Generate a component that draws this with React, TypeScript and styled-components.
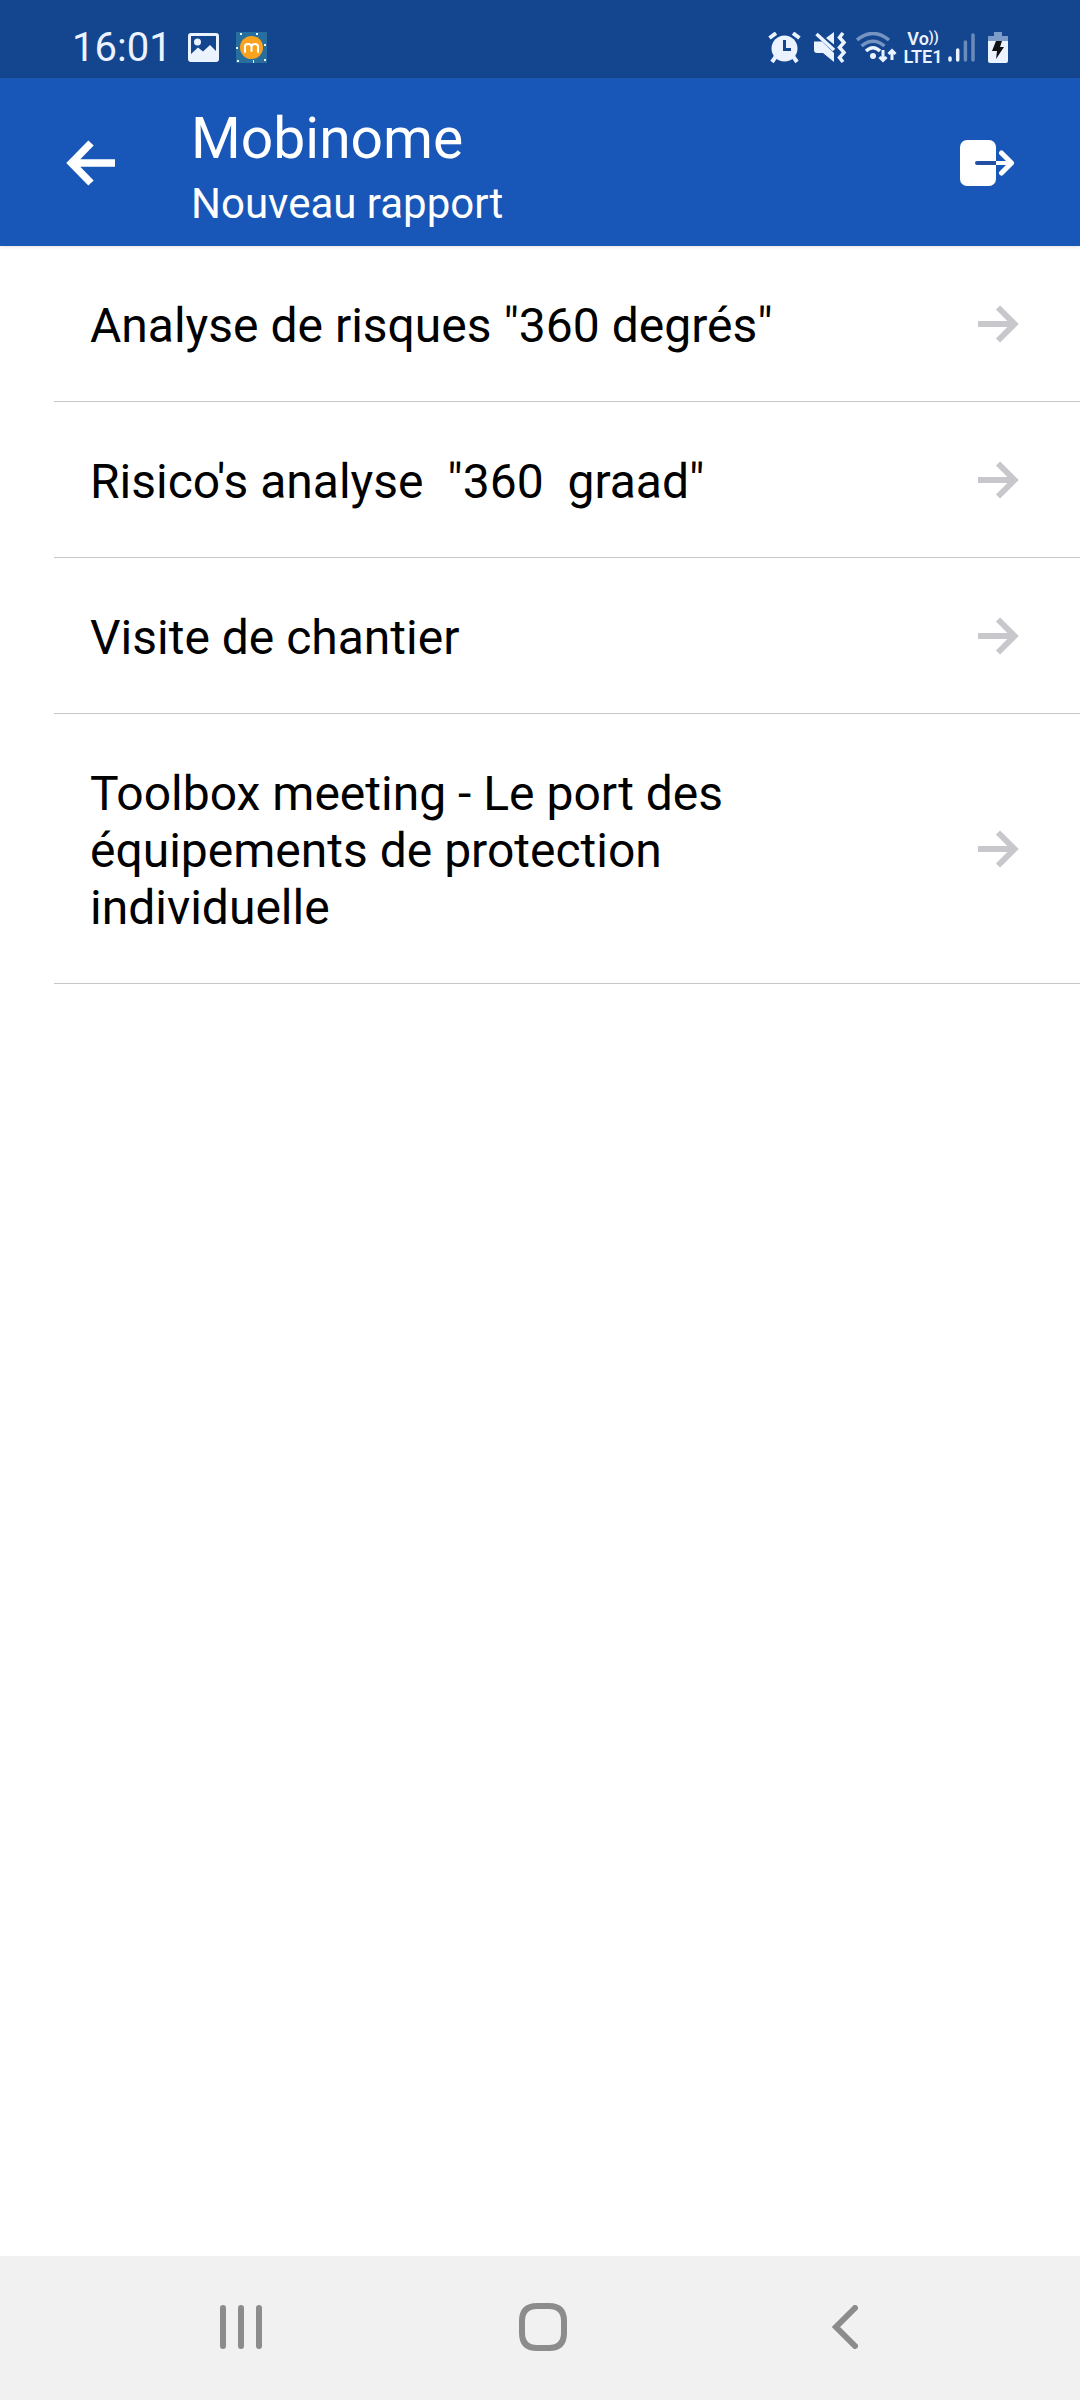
import React from 'react';
import styled, { createGlobalStyle } from 'styled-components';

const GlobalStyle = createGlobalStyle`
  *, *::before, *::after { box-sizing: border-box; }
  body { margin: 0; background: #fff; font-family: Roboto, "Noto Sans", sans-serif; color: #000; }
  button { font: inherit; color: inherit; border: 0; background: none; padding: 0; cursor: pointer; }
  svg { display: block; flex: none; }
`;

const Screen = styled.div`
  display: flex;
  flex-direction: column;
  min-height: 100vh;
`;

const StatusBar = styled.div`
  display: flex;
  align-items: center;
  justify-content: space-between;
  height: 78px;
  padding: 18px 72px 0 72px;
  background: #14458f;
  color: #eaf3ff;
`;

const StatusGroup = styled.div<{ $gap: number }>`
  display: flex;
  align-items: center;
  gap: ${(p) => p.$gap}px;
`;

const Clock = styled.time`
  font-size: 40px;
  line-height: 48px;
`;

const Network = styled.div`
  display: flex;
  flex-direction: column;
  width: 42px;
  font-size: 18px;
  font-weight: 600;
  line-height: 18px;
  text-align: center;
`;

const Waves = styled.span`
  font-size: 14px;
  line-height: 14px;
  vertical-align: top;
`;

const AppBar = styled.header`
  display: flex;
  align-items: center;
  padding: 2px 57px 0 55px;
  background: #1857b8;
  color: #fff;
  box-shadow: 0 1px 4px rgba(0, 0, 0, 0.12);
`;

const BarButton = styled.button`
  display: flex;
  align-items: center;
  justify-content: center;
  width: 72px;
  height: 72px;
`;

const Titles = styled.div`
  flex: 1;
  padding: 22px 0 14px 64px;
`;

const Title = styled.h1`
  margin: 0;
  font-size: 57px;
  font-weight: 400;
  line-height: 74px;
`;

const Subtitle = styled.p`
  margin: 0;
  font-size: 42px;
  line-height: 56px;
`;

const Reports = styled.ul`
  flex: 1;
  margin: 0;
  padding: 0 0 0 54px;
  list-style: none;
`;

const ReportItem = styled.li`
  border-bottom: 1px solid #c8c7cc;
`;

const ReportButton = styled.button`
  display: flex;
  align-items: center;
  justify-content: space-between;
  width: 100%;
  padding: 0 60px 0 36px;
  text-align: left;
`;

const ReportName = styled.span`
  max-width: 700px;
  padding: 51px 0 47px;
  font-size: 48px;
  line-height: 57px;
  white-space: pre-wrap;
`;

const SystemNav = styled.nav`
  display: grid;
  grid-template-columns: repeat(3, 1fr);
  height: 144px;
  padding: 0 84px 2px 90px;
  background: #f1f1f1;
  color: #8c8c8c;
`;

const NavButton = styled.button`
  display: flex;
  align-items: center;
  justify-content: center;
`;

const PictureIcon = () => (
  <svg width="32" height="30" viewBox="0 0 32 30" aria-hidden="true">
    <path fill="currentColor" fillRule="evenodd" d="M3 0H28Q31 0 31 3V26Q31 29 28 29H3Q0 29 0 26V3Q0 0 3 0ZM3 3V21L10 14.500L15 18.500L22 12L28 18V3Z" />
    <circle cx="9.500" cy="9" r="3.500" fill="currentColor" />
  </svg>
);

const MobinomeIcon = () => (
  <svg width="32" height="32" viewBox="0 0 32 32" aria-hidden="true">
    <path fill="#286f9f" d="M0 0H31V31H0Z" />
    <path fill="#e8f6ff" d="M4 1h2v2h-2zM20 1h2v2h-2zM0 15h2v2h-2zM28 12h2v2h-2zM1 28h2v2h-2zM17 28h1v3h-1zM28 27h2v2h-2z" />
    <circle cx="15.500" cy="15.500" r="11.500" fill="#f9a31f" />
    <path fill="none" stroke="#fff" strokeWidth="2" strokeLinecap="round" d="M9 20V14.500Q9 12 12 12Q15.500 12 15.500 15V19M15.500 15Q15.500 12 19 12Q22 12 22 14.500V20" />
  </svg>
);

const AlarmIcon = () => (
  <svg width="42" height="32" viewBox="0 0 42 32" aria-hidden="true">
    <circle cx="16.500" cy="16.500" r="13" fill="currentColor" />
    <path fill="none" stroke="currentColor" strokeWidth="4" d="M1.500 6L8 1.200M25 1.200L31.500 6M7.500 25L4 30M25.500 25L29 30" />
    <path fill="none" stroke="#14458f" strokeWidth="3" d="M16.500 8V17.500H23" />
  </svg>
);

const MuteVibrateIcon = () => (
  <svg width="38" height="32" viewBox="0 0 38 32" aria-hidden="true">
    <path fill="currentColor" d="M0 9.500H8L20 21V30L9 21H3Q0 21 0 18ZM12 6L20 0V12.500Z" />
    <path fill="none" stroke="currentColor" strokeWidth="3.500" d="M2.500 2L20 18" />
    <path fill="none" stroke="currentColor" strokeWidth="3.500" d="M29 1L25.500 5.500L30 10.500L25.500 15.500L30 20.500L25.500 25.500L29 30" />
  </svg>
);

const WifiIcon = () => (
  <svg width="42" height="32" viewBox="0 0 42 32" aria-hidden="true">
    <g fill="none" stroke="currentColor" strokeWidth="3.500">
      <path opacity="0.450" d="M1 8Q17 -5 33 8" />
      <path opacity="0.450" d="M5.500 14Q17 4.500 28.500 14" />
      <path d="M10 19Q17 12.500 24 19" />
    </g>
    <circle cx="17" cy="24" r="3" fill="currentColor" />
    <path fill="none" stroke="currentColor" strokeWidth="3" d="M27 18V29M23.500 25L27 28.500L30.500 25M36 28V18M32.500 22L36 18.500L39.500 22" />
  </svg>
);

const SignalIcon = () => (
  <svg width="36" height="30" viewBox="0 0 36 30" aria-hidden="true">
    <g stroke="currentColor" strokeWidth="3.500" strokeLinecap="round">
      <path d="M2 25V27M9.700 17V27" />
      <path opacity="0.400" d="M17.400 9V27M25 2V27" />
    </g>
  </svg>
);

const BatteryIcon = () => (
  <svg width="20" height="32" viewBox="0 0 20 32" aria-hidden="true">
    <path fill="#7d9cca" d="M6 0H14V4H20V9H0V4H6Z" />
    <path fill="currentColor" d="M0 9H20V29Q20 31 18 31H2Q0 31 0 29Z" />
    <path fill="#111" d="M8 9H14L12 15H16L8 27L9 19H4Z" />
  </svg>
);

const BackArrowIcon = () => (
  <svg width="50" height="48" viewBox="0 0 50 48" aria-hidden="true">
    <path fill="none" stroke="currentColor" strokeWidth="7.500" d="M25 4L5.500 24L25 44M5.500 24H49" />
  </svg>
);

const LogoutIcon = () => (
  <svg width="54" height="46" viewBox="0 0 54 46" aria-hidden="true">
    <rect width="36" height="46" rx="7" fill="currentColor" />
    <path stroke="#2450a4" strokeWidth="4" strokeLinecap="round" d="M17 23H34" />
    <path stroke="#2450a4" strokeWidth="4" d="M30 23H36" />
    <path stroke="currentColor" strokeWidth="4" d="M36 23H51" />
    <path fill="none" stroke="currentColor" strokeWidth="5" strokeLinecap="round" strokeLinejoin="round" d="M41.500 13L51.500 23L41.500 33" />
  </svg>
);

const ForwardArrowIcon = () => (
  <svg width="42" height="38" viewBox="0 0 42 38" aria-hidden="true">
    <path fill="none" stroke="#c7c7cc" strokeWidth="6" d="M20 2.500L36.500 19L20 35.500M0 19H36" />
  </svg>
);

const RecentsIcon = () => (
  <svg width="42" height="44" viewBox="0 0 42 44" aria-hidden="true">
    <path stroke="currentColor" strokeWidth="6" strokeLinecap="round" d="M3 3V41M21 3V41M39 3V41" />
  </svg>
);

const HomeIcon = () => (
  <svg width="48" height="48" viewBox="0 0 48 48" aria-hidden="true">
    <path fill="none" stroke="currentColor" strokeWidth="6" d="M18 3H30Q45 3 45 18V30Q45 45 30 45H18Q3 45 3 30V18Q3 3 18 3Z" />
  </svg>
);

const NavBackIcon = () => (
  <svg width="26" height="44" viewBox="0 0 26 44" aria-hidden="true">
    <path fill="none" stroke="currentColor" strokeWidth="6" strokeLinecap="round" d="M23 3L4 22L23 41" />
  </svg>
);

const reports = [
  'Analyse de risques "360 degrés"',
  'Risico\'s analyse  "360  graad"',
  'Visite de chantier',
  'Toolbox meeting - Le port des équipements de protection individuelle',
];

export default function App() {
  return (
    <Screen>
      <GlobalStyle />
      <StatusBar>
        <StatusGroup $gap={16}>
          <Clock>16:01</Clock>
          <PictureIcon />
          <MobinomeIcon />
        </StatusGroup>
        <StatusGroup $gap={4}>
          <AlarmIcon />
          <MuteVibrateIcon />
          <WifiIcon />
          <Network>
            <span>Vo<Waves>))</Waves></span>
            <span>LTE1</span>
          </Network>
          <SignalIcon />
          <BatteryIcon />
        </StatusGroup>
      </StatusBar>
      <AppBar>
        <BarButton aria-label="Retour">
          <BackArrowIcon />
        </BarButton>
        <Titles>
          <Title>Mobinome</Title>
          <Subtitle>Nouveau rapport</Subtitle>
        </Titles>
        <BarButton aria-label="Déconnexion">
          <LogoutIcon />
        </BarButton>
      </AppBar>
      <Reports>
        {reports.map((name) => (
          <ReportItem key={name}>
            <ReportButton>
              <ReportName>{name}</ReportName>
              <ForwardArrowIcon />
            </ReportButton>
          </ReportItem>
        ))}
      </Reports>
      <SystemNav>
        <NavButton aria-label="Applications récentes">
          <RecentsIcon />
        </NavButton>
        <NavButton aria-label="Accueil">
          <HomeIcon />
        </NavButton>
        <NavButton aria-label="Retour système">
          <NavBackIcon />
        </NavButton>
      </SystemNav>
    </Screen>
  );
}
